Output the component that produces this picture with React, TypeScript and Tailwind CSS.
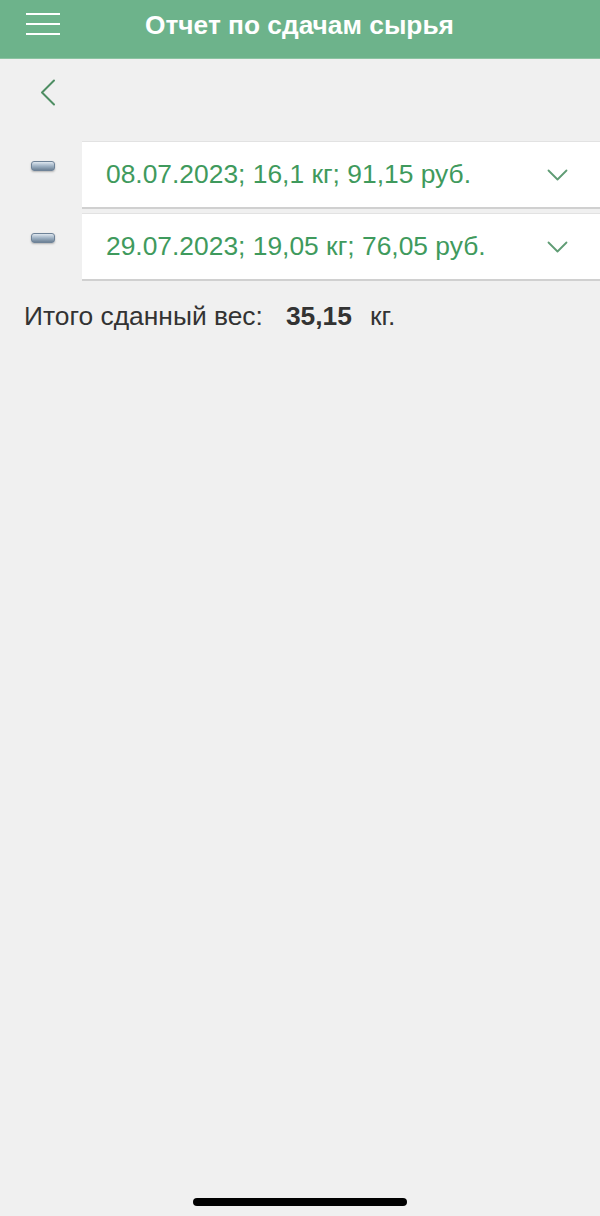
const rows = [
  { id: 1, label: '08.07.2023; 16,1 кг; 91,15 руб.' },
  { id: 2, label: '29.07.2023; 19,05 кг; 76,05 руб.' },
];

function MinusIcon() {
  return (
    <div className="w-[24px] h-[10px] rounded-[3px] border border-[#6f8398] bg-gradient-to-b from-[#dfe7ef] via-[#9fb2c4] to-[#6e8296] shadow-[0_1px_2px_rgba(0,0,0,0.25)]" />
  );
}

export default function App() {
  return (
    <div
      className="w-[600px] h-[1216px] bg-[#f0f0f0] flex flex-col"
      style={{ fontFamily: '"Liberation Sans", Arial, sans-serif' }}
    >
      {/* Header */}
      <div className="h-[59px] bg-[#6db38b] border-b border-[#8cc3a2] flex items-start pt-[10px] shrink-0">
        <div className="ml-[26px] mt-[3px] w-[34px] flex flex-col gap-[8px]">
          <span className="h-[2px] bg-white block" />
          <span className="h-[2px] bg-white block" />
          <span className="h-[2px] bg-white block" />
        </div>
        <h1 className="ml-[85px] text-white text-[26.3px] font-bold leading-[30px]">Отчет по сдачам сырья</h1>
      </div>

      {/* Back */}
      <div className="h-[62px] flex items-center pl-[40px] pt-[4px]">
        <svg width="16" height="27" viewBox="0 0 16 27" fill="none">
          <polyline points="14,1.5 2,13.5 14,25.5" stroke="#4e8e63" strokeWidth="2" strokeLinecap="round" strokeLinejoin="round" />
        </svg>
      </div>

      {/* Rows */}
      <div className="flex flex-col gap-[4px] mt-[20px]">
        {rows.map((r) => (
          <div key={r.id} className="flex">
            <div className="w-[82px] pl-[31px] pt-[20px] shrink-0">
              <MinusIcon />
            </div>
            <div className="flex-1 h-[68px] bg-white border-t border-[#e2e2e2] border-b-2 border-b-[#d0d0d0] flex items-center pl-[24px] pr-[32px]">
              <span className="flex-1 text-[#3f9a5d] text-[26.4px] leading-none">{r.label}</span>
              <svg width="21" height="13" viewBox="0 0 21 13" fill="none" className="mt-[2px]">
                <polyline points="1.5,1.5 10.5,10.5 19.5,1.5" stroke="#5f9c74" strokeWidth="1.8" strokeLinecap="round" strokeLinejoin="round" />
              </svg>
            </div>
          </div>
        ))}
      </div>

      {/* Total */}
      <div className="mt-[16px] pl-[24px] flex items-baseline text-[26.4px] text-[#333333]">
        <span>Итого сданный вес:</span>
        <span className="ml-[23px] font-bold">35,15</span>
        <span className="ml-[18px]">кг.</span>
      </div>

      <div className="flex-1" />

      {/* Home indicator */}
      <div className="flex justify-center pb-[10px]">
        <div className="w-[214px] h-[8px] rounded-full bg-black" />
      </div>
    </div>
  );
}
